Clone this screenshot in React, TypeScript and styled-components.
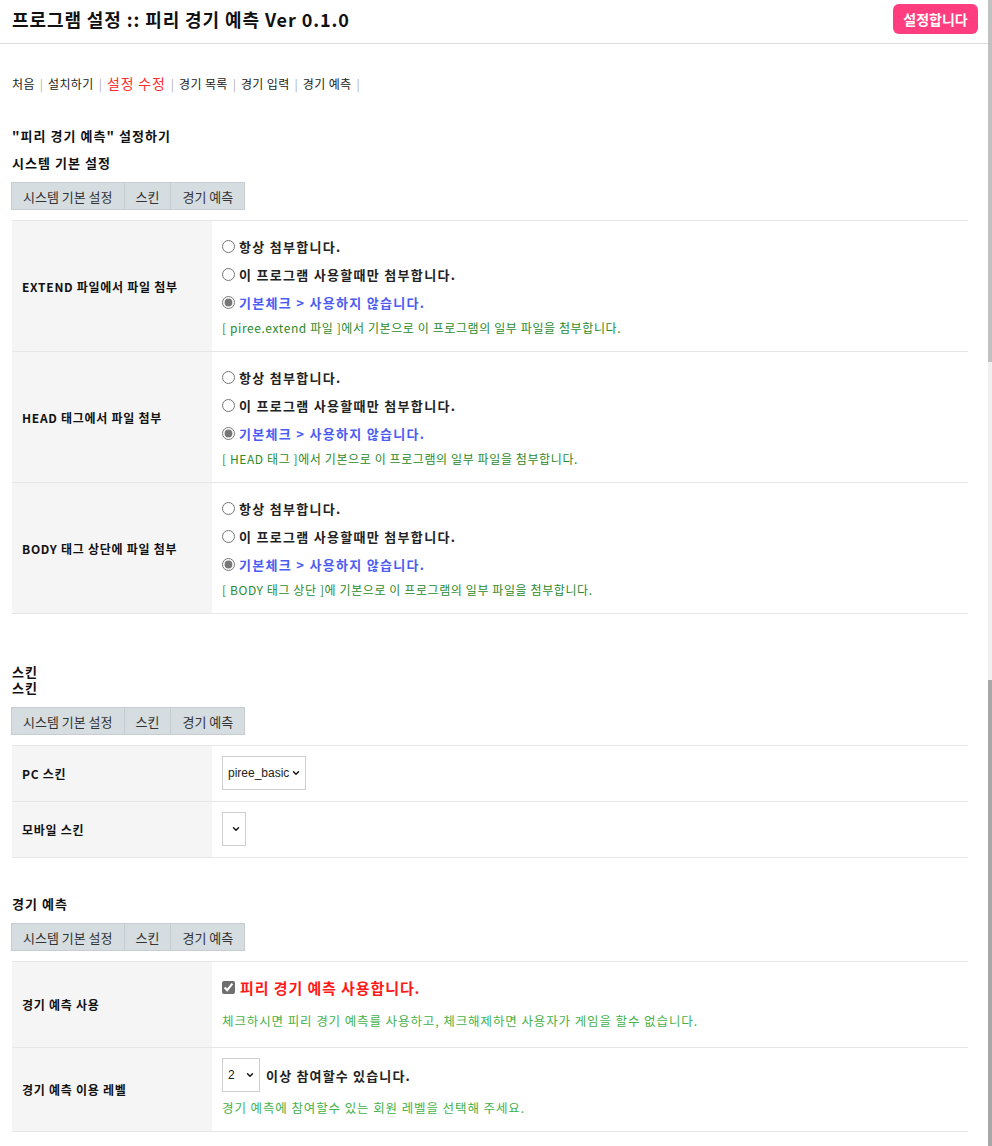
import React from "react";
import styled, { createGlobalStyle } from "styled-components";
import { ChevronDown } from "lucide-react";

const GlobalStyle = createGlobalStyle`
  html, body { margin: 0; padding: 0; background: #fff; }
  body {
    font-family: "Noto Sans CJK KR", "Noto Sans", sans-serif;
    color: #222;
    font-size: 13px;
  }
  * { box-sizing: border-box; }
`;

const Page = styled.div`
  margin-right: 4px;
`;

const ScrollTrack = styled.div`
  position: fixed;
  top: 0;
  right: 0;
  bottom: 0;
  width: 4px;
  background: #f0f0f0;
  display: flex;
  flex-direction: column;
  justify-content: space-between;
`;

const ScrollThumb = styled.div<{ $h: number; $c: string }>`
  height: ${(p) => p.$h}px;
  background: ${(p) => p.$c};
`;

const Header = styled.header`
  display: flex;
  align-items: center;
  justify-content: space-between;
  height: 44px;
  padding: 0 10px 0 12px;
  border-bottom: 1px solid #dcdcdc;
`;

const Title = styled.h1`
  margin: -6px 0 0;
  font-size: 18px;
  font-weight: 700;
  line-height: 24px;
  letter-spacing: 0.05em;
  color: #111;
`;

const SaveButton = styled.button`
  height: 30px;
  width: 85px;
  border: 0;
  border-radius: 6px;
  background: #ff3d7f;
  color: #fff;
  font-family: inherit;
  font-size: 14px;
  font-weight: 700;
  margin-top: -6px;
`;

const Main = styled.main`
  padding: 0 20px 16px 12px;
`;

const Nav = styled.nav`
  margin-top: 31px;
  font-size: 12px;
  line-height: 16px;
  color: #222;
`;

const NavItem = styled.span<{ $active?: boolean }>`
  color: ${(p) => (p.$active ? "#ff2d2d" : "#222")};
  font-size: ${(p) => (p.$active ? "14px" : "12px")};
  letter-spacing: ${(p) => (p.$active ? "0.06em" : "0.03em")};
`;

const Sep = styled.span`
  color: #b0b0b0;
  margin: 0 5px;
`;

const Heading = styled.div<{ $mt: number }>`
  margin-top: ${(p) => p.$mt}px;
  font-size: 13px;
  font-weight: 700;
  line-height: 16px;
  letter-spacing: 0.08em;
  color: #111;
`;

const Tabs = styled.div`
  display: inline-flex;
  margin: 11px 0 0 -1px;
  border: 1px solid #c6cdd1;
  background: #d6dde1;
  height: 28px;
`;

const Tab = styled.div`
  display: flex;
  align-items: center;
  padding: 0 11px;
  font-size: 13px;
  color: #333;
  & + & { border-left: 1px solid #c6cdd1; }
`;

const Table = styled.div`
  margin-top: 10px;
  border-top: 1px solid #e6e6e6;
`;

const Row = styled.div<{ $pad: string }>`
  display: grid;
  grid-template-columns: 200px 1fr;
  border-bottom: 1px solid #e6e6e6;
  & > div:last-child { padding: ${(p) => p.$pad}; }
`;

const Label = styled.div`
  background: #f5f5f5;
  display: flex;
  align-items: center;
  padding: 0 10px;
  font-size: 12px;
  font-weight: 700;
  letter-spacing: 0.06em;
  color: #111;
`;

const Cell = styled.div`
  display: flex;
  flex-direction: column;
  align-items: flex-start;
`;

const RadioLine = styled.label<{ $blue?: boolean }>`
  display: flex;
  align-items: center;
  height: 28px;
  font-size: 13px;
  font-weight: 700;
  letter-spacing: 0.1em;
  color: ${(p) => (p.$blue ? "#4b5cf2" : "#222")};
  input {
    margin: 0 4px 0 0;
    width: 13px;
    height: 13px;
    accent-color: #777;
  }
`;

const Note = styled.div<{ $light?: boolean; $mt: number }>`
  margin-top: ${(p) => p.$mt}px;
  font-size: ${(p) => (p.$light ? "12.5px" : "12px")};
  line-height: 20px;
  letter-spacing: ${(p) => (p.$light ? "0.9px" : "0.6px")};
  color: ${(p) => (p.$light ? "#45b149" : "#2b8a2b")};
`;

const SelectBox = styled.div`
  position: relative;
  display: inline-flex;
  align-items: center;
  svg {
    position: absolute;
    right: 5px;
    pointer-events: none;
    color: #111;
  }
`;

const Select = styled.select<{ $w: number }>`
  appearance: none;
  width: ${(p) => p.$w}px;
  height: 34px;
  border: 1px solid #cfcfcf;
  border-radius: 0;
  background: #fff;
  font-family: "Liberation Sans", Arial, sans-serif;
  font-size: 12px;
  color: #222;
  padding: 0 12px 0 5px;
`;

const DropSelect = ({ w, value, options }: { w: number; value: string; options: string[] }) => (
  <SelectBox>
    <Select $w={w} defaultValue={value}>
      {options.map((o) => (
        <option key={o} value={o}>{o}</option>
      ))}
    </Select>
    <ChevronDown size={10} strokeWidth={3.4} />
  </SelectBox>
);

const CheckLine = styled.label`
  display: flex;
  align-items: center;
  height: 22px;
  font-size: 15px;
  font-weight: 700;
  letter-spacing: 0.06em;
  color: #ff1a1a;
  input {
    margin: 0 5px 0 0;
    width: 13px;
    height: 13px;
    accent-color: #6f6f6f;
  }
`;

const InlineRow = styled.div`
  display: flex;
  align-items: center;
  gap: 6px;
  font-size: 13px;
  font-weight: 700;
  letter-spacing: 0.09em;
  color: #222;
`;

const TabBar = () => (
  <Tabs>
    <Tab>시스템 기본 설정</Tab>
    <Tab>스킨</Tab>
    <Tab>경기 예측</Tab>
  </Tabs>
);

const attachRows = [
  { label: "EXTEND 파일에서 파일 첨부", name: "extend", note: "[ piree.extend 파일 ]에서 기본으로 이 프로그램의 일부 파일을 첨부합니다." },
  { label: "HEAD 태그에서 파일 첨부", name: "head", note: "[ HEAD 태그 ]에서 기본으로 이 프로그램의 일부 파일을 첨부합니다." },
  { label: "BODY 태그 상단에 파일 첨부", name: "body", note: "[ BODY 태그 상단 ]에 기본으로 이 프로그램의 일부 파일을 첨부합니다." },
];

export default function App() {
  return (
    <>
      <GlobalStyle />
      <ScrollTrack>
        <ScrollThumb $h={362} $c="#c1c1c1" />
        <ScrollThumb $h={466} $c="#a8a8a8" />
      </ScrollTrack>
      <Page>
        <Header>
          <Title>프로그램 설정 :: 피리 경기 예측 Ver 0.1.0</Title>
          <SaveButton>설정합니다</SaveButton>
        </Header>
        <Main>
          <Nav>
            <NavItem>처음</NavItem><Sep>|</Sep>
            <NavItem>설치하기</NavItem><Sep>|</Sep>
            <NavItem $active>설정 수정</NavItem><Sep>|</Sep>
            <NavItem>경기 목록</NavItem><Sep>|</Sep>
            <NavItem>경기 입력</NavItem><Sep>|</Sep>
            <NavItem>경기 예측</NavItem><Sep>|</Sep>
          </Nav>

          <Heading $mt={36}>"피리 경기 예측" 설정하기</Heading>
          <Heading $mt={11}>시스템 기본 설정</Heading>
          <TabBar />
          <Table>
            {attachRows.map((r) => (
              <Row key={r.name} $pad="11px 10px 13px">
                <Label>{r.label}</Label>
                <Cell>
                  <RadioLine><input type="radio" name={r.name} readOnly />항상 첨부합니다.</RadioLine>
                  <RadioLine><input type="radio" name={r.name} readOnly />이 프로그램 사용할때만 첨부합니다.</RadioLine>
                  <RadioLine $blue><input type="radio" name={r.name} defaultChecked />기본체크 &gt; 사용하지 않습니다.</RadioLine>
                  <Note $mt={2}>{r.note}</Note>
                </Cell>
              </Row>
            ))}
          </Table>

          <Heading $mt={50}>스킨<br />스킨</Heading>
          <TabBar />
          <Table>
            <Row $pad="10px 10px 11px">
              <Label>PC 스킨</Label>
              <Cell>
                <DropSelect w={84} value="piree_basic" options={["piree_basic"]} />
              </Cell>
            </Row>
            <Row $pad="10px 10px 11px">
              <Label>모바일 스킨</Label>
              <Cell>
                <DropSelect w={24} value="" options={[""]} />
              </Cell>
            </Row>
          </Table>

          <Heading $mt={38}>경기 예측</Heading>
          <TabBar />
          <Table>
            <Row $pad="14px 10px 16px">
              <Label>경기 예측 사용</Label>
              <Cell>
                <CheckLine><input type="checkbox" defaultChecked />피리 경기 예측 사용합니다.</CheckLine>
                <Note $light $mt={13}>체크하시면 피리 경기 예측를 사용하고, 체크해제하면 사용자가 게임을 할수 없습니다.</Note>
              </Cell>
            </Row>
            <Row $pad="10px 10px 13px">
              <Label>경기 예측 이용 레벨</Label>
              <Cell>
                <InlineRow>
                  <DropSelect w={38} value="2" options={["1", "2"]} />
                  이상 참여할수 있습니다.
                </InlineRow>
                <Note $light $mt={6}>경기 예측에 참여할수 있는 회원 레벨을 선택해 주세요.</Note>
              </Cell>
            </Row>
          </Table>
        </Main>
      </Page>
    </>
  );
}
